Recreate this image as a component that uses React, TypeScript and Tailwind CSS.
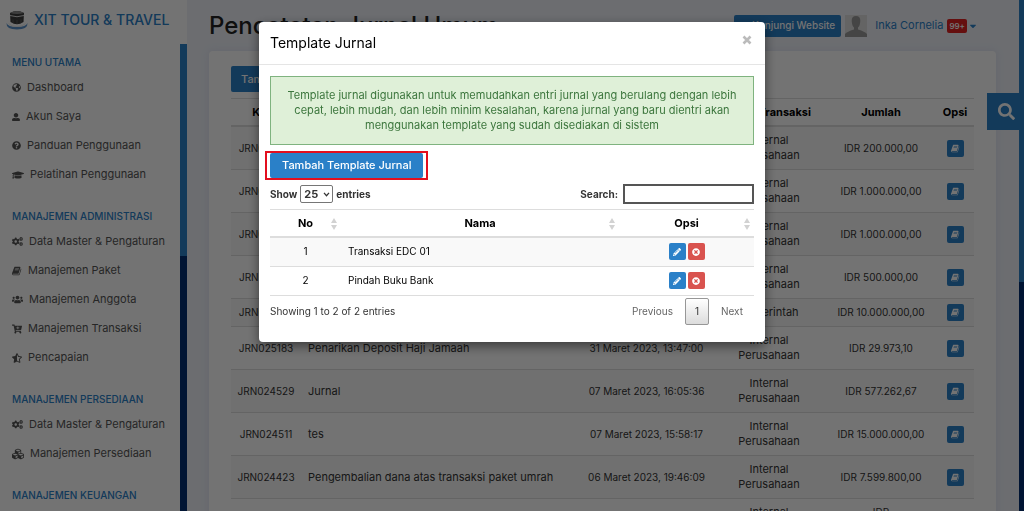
import React from 'react';
import {
  FaCaretDown,
  FaCartPlus,
  FaCogs,
  FaCubes,
  FaExternalLinkAlt,
  FaGlobeAmericas,
  FaGraduationCap,
  FaPencilAlt,
  FaQuestionCircle,
  FaSearch,
  FaStarHalfAlt,
  FaTimesCircle,
  FaUserAlt,
  FaUsers,
} from 'react-icons/fa';

const BookIcon: React.FC<{ className?: string }> = ({ className }) => (
  <svg viewBox="0 0 1792 1792" fill="currentColor" className={className} aria-hidden="true">
    <path d="M1639 478q40 57 18 129l-275 906q-19 64-76.5 107.5t-122.5 43.5h-923q-77 0-148.5-53.5t-99.5-131.5q-24-67-2-127 0-4 3-27t4-37q1-8-3-21.5t-3-19.5q2-11 8-21t16.5-23.5 16.5-23.5q23-38 45-91.5t30-91.5q3-10 .5-30t-.5-28q3-11 17-28t17-23q21-36 42-92t25-90q1-9-2.5-32t.5-28q4-13 22-30.5t22-22.5q19-26 42.5-84.5t27.5-96.5q1-8-3-25.5t-2-26.5q2-8 9-18t18-23 17-21q8-12 16.5-30.5t15-35 16-36 19.5-32 26.5-23.5 36-11.5 47.5 5.5l-1 3q38-9 51-9h761q74 0 114 56t18 130l-274 906q-36 119-71.5 153.5t-128.5 34.5h-869q-27 0-38 15-11 16-1 43 24 70 144 70h923q29 0 56-15.5t35-41.5l300-987q7-22 5-57 38 15 59 43zm-1064 2q-4 13 2 22.5t20 9.5h608q13 0 25.5-9.5t16.5-22.5l21-64q4-13-2-22.5t-20-9.5h-608q-13 0-25.5 9.5t-16.5 22.5zm-83 256q-4 13 2 22.5t20 9.5h608q13 0 25.5-9.5t16.5-22.5l21-64q4-13-2-22.5t-20-9.5h-608q-13 0-25.5 9.5t-16.5 22.5z" />
  </svg>
);

const Logo: React.FC = () => (
  <svg viewBox="0 0 22 20" className="w-[22px] h-5" aria-hidden="true">
    <path d="M4 3 Q11 -1 18 3 L17.500 12 Q11 16.500 4.500 12 Z" fill="#3d3d3d" />
    <path d="M4 3 Q11 -1 18 3 Q11 5 4 3 Z" fill="#8a8a8a" />
    <path d="M4 5.500 Q11 8 18 5.500" fill="none" stroke="#d8d8d8" strokeWidth="1" />
    <path d="M7 9.500 V13 M11 10 V14 M15 9.500 V13" stroke="#666" strokeWidth="0.7" />
    <path d="M0.500 13 Q2 17 11 17 Q20 17 21.500 13 Q22 19.500 11 19.500 Q0 19.500 0.500 13 Z" fill="#5b93cc" />
    <path d="M2.500 13.500 Q5 16.500 11 16.500 Q17 16.500 19.500 13.500" fill="none" stroke="#e4e4e4" strokeWidth="0.8" />
  </svg>
);

const menu = [
  {
    title: 'MENU UTAMA',
    items: [
      { label: 'Dashboard', icon: FaGlobeAmericas, iconClass: 'size-[9px] mr-1.5' },
      { label: 'Akun Saya', icon: FaUserAlt, iconClass: 'size-2 mr-1.5' },
      { label: 'Panduan Penggunaan', icon: FaQuestionCircle, iconClass: 'size-[9px] mr-1.5' },
      { label: 'Pelatihan Penggunaan', icon: FaGraduationCap, iconClass: 'size-3 mr-1.5' },
    ],
  },
  {
    title: 'MANAJEMEN ADMINISTRASI',
    items: [
      { label: 'Data Master & Pengaturan', icon: FaCogs, iconClass: 'size-[11px] mr-1.5' },
      { label: 'Manajemen Paket', icon: BookIcon, iconClass: 'size-[10px] mr-1.5' },
      { label: 'Manajemen Anggota', icon: FaUsers, iconClass: 'size-[11px] mr-1.5' },
      { label: 'Manajemen Transaksi', icon: FaCartPlus, iconClass: 'size-[10px] mr-1.5' },
      { label: 'Pencapaian', icon: FaStarHalfAlt, iconClass: 'size-[10px] mr-1.5' },
    ],
  },
  {
    title: 'MANAJEMEN PERSEDIAAN',
    items: [
      { label: 'Data Master & Pengaturan', icon: FaCogs, iconClass: 'size-[11px] mr-1.5' },
      { label: 'Manajemen Persediaan', icon: FaCubes, iconClass: 'size-3 mr-1.5' },
    ],
  },
  { title: 'MANAJEMEN KEUANGAN', items: [] },
];

const journals = [
  { code: 'JRN025190', note: '', date: '', type: 'Internal Perusahaan', amount: 'IDR 200.000,00' },
  { code: 'JRN025189', note: '', date: '', type: 'Internal Perusahaan', amount: 'IDR 1.000.000,00' },
  { code: 'JRN025188', note: '', date: '', type: 'Internal Perusahaan', amount: 'IDR 1.000.000,00' },
  { code: 'JRN025187', note: '', date: '', type: 'Internal Perusahaan', amount: 'IDR 500.000,00' },
  { code: 'JRN025185', note: '', date: '', type: 'Pemerintah', amount: 'IDR 10.000.000,00' },
  { code: 'JRN025183', note: 'Penarikan Deposit Haji Jamaah', date: '31 Maret 2023, 13:47:00', type: 'Internal Perusahaan', amount: 'IDR 29.973,10' },
  { code: 'JRN024529', note: 'Jurnal', date: '07 Maret 2023, 16:05:36', type: 'Internal Perusahaan', amount: 'IDR 577.262,67' },
  { code: 'JRN024511', note: 'tes', date: '07 Maret 2023, 15:58:17', type: 'Internal Perusahaan', amount: 'IDR 15.000.000,00' },
  { code: 'JRN024423', note: 'Pengembalian dana atas transaksi paket umrah', date: '06 Maret 2023, 19:46:09', type: 'Internal Perusahaan', amount: 'IDR 7.599.800,00' },
  { code: '', note: '', date: '', type: 'Internal Perusahaan', amount: 'IDR 1.007.599.800.000,00' },
];

const templates = ['Transaksi EDC 01', 'Pindah Buku Bank'];

const SortIcon: React.FC = () => (
  <svg viewBox="0 0 6 12" className="absolute right-1 top-2 w-1.5 h-3 fill-[#d2d2d2]" aria-hidden="true">
    <path d="M3 0 L6 5 H0 Z M3 12 L6 7 H0 Z" />
  </svg>
);

const Sidebar: React.FC = () => (
  <aside className="w-[187px] shrink-0 bg-white flex flex-col">
    <a href="#" className="h-11 shrink-0 pl-1.5 pb-1 flex items-center gap-1.5 text-[#2a80c8] text-sm font-medium whitespace-nowrap">
      <Logo />
      XIT TOUR &amp; TRAVEL
    </a>
    <div className="flex-1 min-h-0 flex">
      <nav className="flex-1 overflow-hidden pl-3 pt-[7px]">
        {menu.map((group) => (
          <div key={group.title} className="mb-4">
            <h2 className="h-[22px] flex items-center text-[10px] font-medium text-[#2a80c8] whitespace-nowrap">{group.title}</h2>
            <ul>
              {group.items.map(({ label, icon: Icon, iconClass }) => (
                <li key={label}>
                  <a href="#" className="h-[29px] flex items-center text-[11px] text-[#555] whitespace-nowrap">
                    <Icon className={iconClass} />
                    {label}
                  </a>
                </li>
              ))}
            </ul>
          </div>
        ))}
      </nav>
      <div className="w-[7px] bg-[#002d72]">
        <div className="h-[212px] bg-[#2a80c8]" />
      </div>
    </div>
  </aside>
);

const JournalTable: React.FC = () => (
  <table className="w-full mt-1.5 table-fixed border-t border-[#ddd] text-[11px] leading-[15px] text-[#333] text-center">
    <thead className="text-black leading-[14px]">
      <tr className="border-b-2 border-[#ddd]">
        <th className="w-[70px] py-1.5">Kode</th>
        <th className="py-1.5">Keterangan</th>
        <th className="w-[131px] py-1.5">Tanggal</th>
        <th className="w-[114px] py-1.5">Jenis Transaksi</th>
        <th className="w-[110px] py-1.5">Jumlah</th>
        <th className="w-[38px] py-1.5">Opsi</th>
      </tr>
    </thead>
    <tbody>
      {journals.map((row, i) => (
        <tr key={i} className="border-b border-[#ddd] odd:bg-[#f9f9f9]">
          <td className="py-1.5 text-[10px]">{row.code}</td>
          <td className="py-1.5 px-[7px] text-left">{row.note}</td>
          <td className="py-1.5 text-[10px] whitespace-nowrap">{row.date}</td>
          <td className="py-1.5 px-5">{row.type}</td>
          <td className="py-1.5 text-[10px]">{row.amount}</td>
          <td>
            <button type="button" aria-label="Detail" className="size-[17px] align-middle rounded-xs bg-[#2a80c8] text-white inline-flex items-center justify-center">
              <BookIcon className="size-[9px]" />
            </button>
          </td>
        </tr>
      ))}
    </tbody>
  </table>
);

const TemplateModal: React.FC = () => (
  <div role="dialog" aria-labelledby="modal-title" className="relative w-[506px] mt-[22px] mx-auto bg-white rounded shadow-[0_4px_12px_rgba(0,0,0,0.5)] text-[10px] text-[#333]">
    <div className="h-[43px] pl-[11px] pr-3 flex justify-between border-b border-[#e5e5e5]">
      <h2 id="modal-title" className="self-center text-sm text-black">Template Jurnal</h2>
      <button type="button" aria-label="Close" className="self-start mt-3 p-px text-[#bbb]">
        <svg viewBox="0 0 10 10" className="size-[10px]" aria-hidden="true">
          <path d="M1.500 1.500 L8.500 8.500 M8.500 1.500 L1.500 8.500" stroke="currentColor" strokeWidth="2.600" />
        </svg>
      </button>
    </div>
    <div className="px-[11px] pt-[11px] pb-[17px]">
      <p className="px-4 py-[11px] border border-[#7fb37f] bg-[#dff0d8] text-[#3c763d] text-[11px] text-center leading-[15px]">
        Template jurnal digunakan untuk memudahkan entri jurnal yang berulang dengan lebih cepat, lebih mudah, dan lebih minim kesalahan, karena jurnal yang baru dientri akan menggunakan template yang sudah disediakan di sistem
      </p>
      <div className="mt-1.5 -ml-[5px] w-fit border-2 border-[#e30f1e] px-[3px]">
        <button type="button" className="block h-[25px] px-3 rounded-xs bg-[#2a80c8] text-white text-[11px] font-medium">Tambah Template Jurnal</button>
      </div>
      <div className="mt-0.5 h-6 flex items-center justify-between font-bold">
        <label className="flex items-center gap-[3px]">
          Show
          <span className="relative flex items-center">
            <select className="h-[18px] w-[33px] appearance-none border border-[#767676] rounded-xs bg-white pl-[3px] text-[11px]" defaultValue="25">
              <option>25</option>
              <option>50</option>
            </select>
            <svg viewBox="0 0 8 6" className="absolute right-[3px] w-[7px] h-[5px]" aria-hidden="true">
              <path d="M1 1 L4 4.500 L7 1" fill="none" stroke="#333" strokeWidth="1.500" />
            </svg>
          </span>
          entries
        </label>
        <label className="flex items-center gap-[5px]">
          Search:
          <input type="search" className="w-[131px] h-5 border-2 border-[#555] bg-white" />
        </label>
      </div>
      <table className="w-full mt-[3px] table-fixed border-t border-[#ddd] text-center leading-[15px]">
        <thead className="text-black text-[11px] leading-[14px]">
          <tr className="border-b-2 border-[#ddd]">
            <th className="relative w-[71px] py-1.5">No<SortIcon /></th>
            <th className="relative py-1.5">Nama<SortIcon /></th>
            <th className="relative w-[135px] py-1.5">Opsi<SortIcon /></th>
          </tr>
        </thead>
        <tbody className="text-black">
          {templates.map((name, i) => (
            <tr key={name} className="h-[29px] border-b border-[#ddd] odd:bg-[#f9f9f9]">
              <td>{i + 1}</td>
              <td className="px-[7px] text-left">{name}</td>
              <td>
                <div className="flex justify-center gap-0.5">
                  <button type="button" aria-label="Edit" className="size-[17px] rounded-xs bg-[#2a80c8] text-white flex items-center justify-center">
                    <FaPencilAlt className="size-2" />
                  </button>
                  <button type="button" aria-label="Hapus" className="size-[17px] rounded-xs bg-[#d9534f] text-white flex items-center justify-center">
                    <FaTimesCircle className="size-2" />
                  </button>
                </div>
              </td>
            </tr>
          ))}
        </tbody>
      </table>
      <div className="mt-0.5 flex justify-between items-center">
        <p>Showing 1 to 2 of 2 entries</p>
        <div className="flex items-center text-[#666]">
          <button type="button" className="px-3">Previous</button>
          <button type="button" className="w-6 h-[27px] border border-[#979797] rounded-xs bg-linear-to-b from-white to-[#dcdcdc] text-[#333]">1</button>
          <button type="button" className="pl-3 pr-[11px]">Next</button>
        </div>
      </div>
    </div>
  </div>
);

const App: React.FC = () => {
  return (
    <div className="h-screen flex overflow-hidden bg-[#eff2f9] font-[Inter,sans-serif]">
      <Sidebar />
      <main className="flex-1 min-w-0 pl-[22px] pr-[23px]">
        <header className="h-[51px] flex items-center justify-between">
          <h1 className="text-2xl font-medium text-[#222] whitespace-nowrap">Pencatatan Jurnal Umum</h1>
          <div className="pr-[18px] flex items-center text-[11px] text-[#2a80c8]">
            <a href="#" className="h-[22px] px-1.5 flex items-center gap-1 rounded-xs bg-[#2a80c8] text-white text-[10px] font-medium">
              <FaExternalLinkAlt className="size-2" />
              Kunjungi Website
            </a>
            <svg viewBox="0 0 22 22" className="size-[22px] ml-1 mr-2" aria-hidden="true">
              <path d="M0 0H22V22H0Z" fill="#dedede" />
              <path d="M11 1 Q15.500 1 15.300 6 Q15 11 13 12.500 V14.500 Q20 16.500 22 19 V22 H0 V19 Q2 16.500 9 14.500 V12.500 Q7 11 6.700 6 Q6.500 1 11 1 Z" fill="#999" />
            </svg>
            <button type="button" className="flex items-center">
              <span className="text-[11px]">Inka Cornelia</span>
              <span className="ml-1 px-0.5 h-3.5 flex items-center rounded-xs bg-[#e02222] text-white text-[8px] font-semibold">99+</span>
              <FaCaretDown className="ml-px size-2.5" />
            </button>
          </div>
        </header>
        <section className="rounded bg-white px-[22px] pt-[15px] shadow-[0_0_8px_rgba(120,140,200,0.15)]">
          <button type="button" className="block h-[26px] px-[10px] rounded-xs bg-[#2a80c8] text-white text-[11px] font-medium">Tambah</button>
          <JournalTable />
        </section>
      </main>
      <div className="w-[5px] bg-[#002d72]">
        <div className="h-[282px] bg-[#2a80c8]" />
      </div>
      <button type="button" aria-label="Cari" className="absolute right-[5px] top-[93px] w-8 h-[37px] bg-[#2a80c8] text-white flex items-center justify-center pl-1.5">
        <FaSearch className="size-[17px]" />
      </button>
      <div className="fixed inset-0 bg-black/55">
        <TemplateModal />
      </div>
    </div>
  );
};

export default App;
